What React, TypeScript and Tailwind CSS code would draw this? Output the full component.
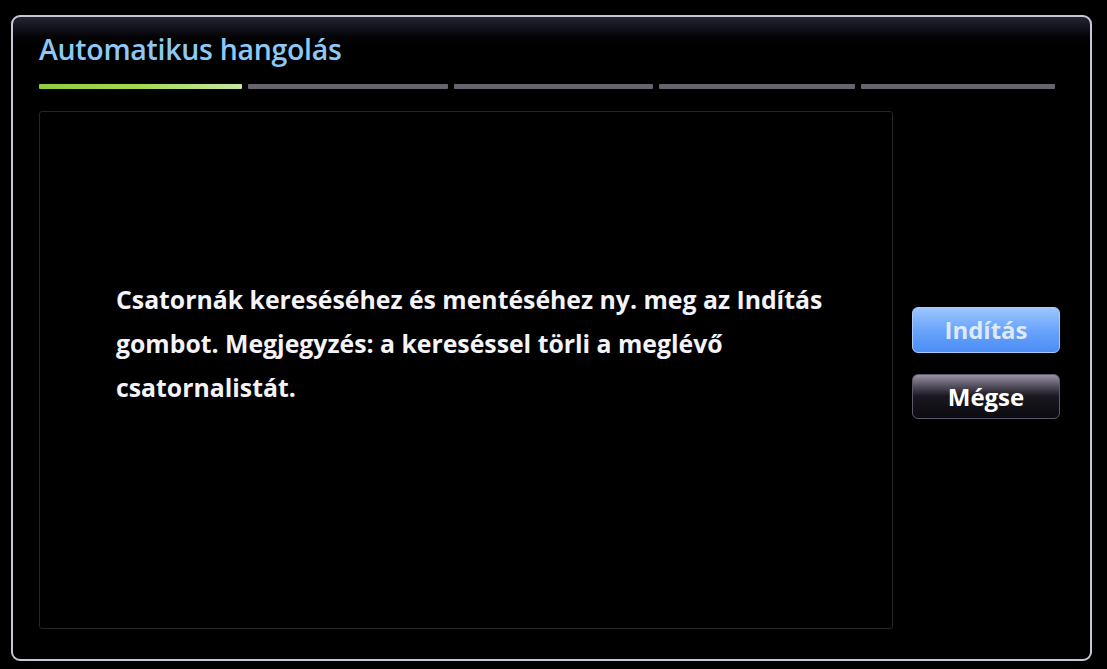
import React from "react";

const steps = [
  { w: "w-[203px]", active: true },
  { w: "w-[200px]", active: false },
  { w: "w-[199px]", active: false },
  { w: "w-[196px]", active: false },
  { w: "w-[194px]", active: false },
];

const App = () => {
  return (
    <div
      className="w-[1107px] h-[669px] bg-black overflow-hidden pt-[15px] pl-[11px]"
      style={{ fontFamily: '"Open Sans", "Noto Sans", sans-serif' }}
    >
      {/* Keret */}
      <div className="w-[1081px] h-[646px] rounded-[9px] border-2 border-[#c9c6d8] bg-gradient-to-b from-[#252531] via-black to-black [background-size:100%_70px] [background-repeat:no-repeat] bg-black flex flex-col pl-[26px] pr-[30px]">
        {/* Cím */}
        <h1 className="mt-[14px] text-[28.5px] leading-[36px] font-semibold text-[#8dc9f6] tracking-[-0.3px]">
          Automatikus hangolás
        </h1>
        {/* Lépések */}
        <div className="mt-[17px] flex gap-[6px]">
          {steps.map((s, i) => (
            <div
              key={i}
              className={`${s.w} h-[5px] rounded-[1px] ${
                s.active ? "bg-gradient-to-r from-[#8fcd3e] via-[#a6d84f] to-[#c8e6a0]" : "bg-[#66656f]"
              }`}
            />
          ))}
        </div>
        {/* Tartalom */}
        <div className="mt-[22px] flex">
          <div className="w-[854px] h-[518px] rounded-[3px] border border-[#262626] pl-[76px] pt-[165px]">
            <p className="text-[24.8px] leading-[44px] font-bold text-[#f3f3f8]">
              Csatornák kereséséhez és mentéséhez ny. meg az Indítás
              <br />
              gombot. Megjegyzés: a kereséssel törli a meglévő
              <br />
              csatornalistát.
            </p>
          </div>
          <div className="ml-[19px] pt-[196px] flex flex-col gap-[21px]">
            <button className="w-[148px] h-[46px] rounded-[6px] border border-[#a9ccff] bg-gradient-to-b from-[#9cc6ff] via-[#6aa4fb] to-[#4b8df5] text-[24px] font-bold text-[#dfe9f7]">
              Indítás
            </button>
            <button className="w-[148px] h-[45px] rounded-[6px] border border-[#5f5868] bg-gradient-to-b from-[#9b93a8] via-[#1a1720] to-[#0c0b10] text-[24px] font-bold text-white">
              Mégse
            </button>
          </div>
        </div>
      </div>
    </div>
  );
};

export default App;
